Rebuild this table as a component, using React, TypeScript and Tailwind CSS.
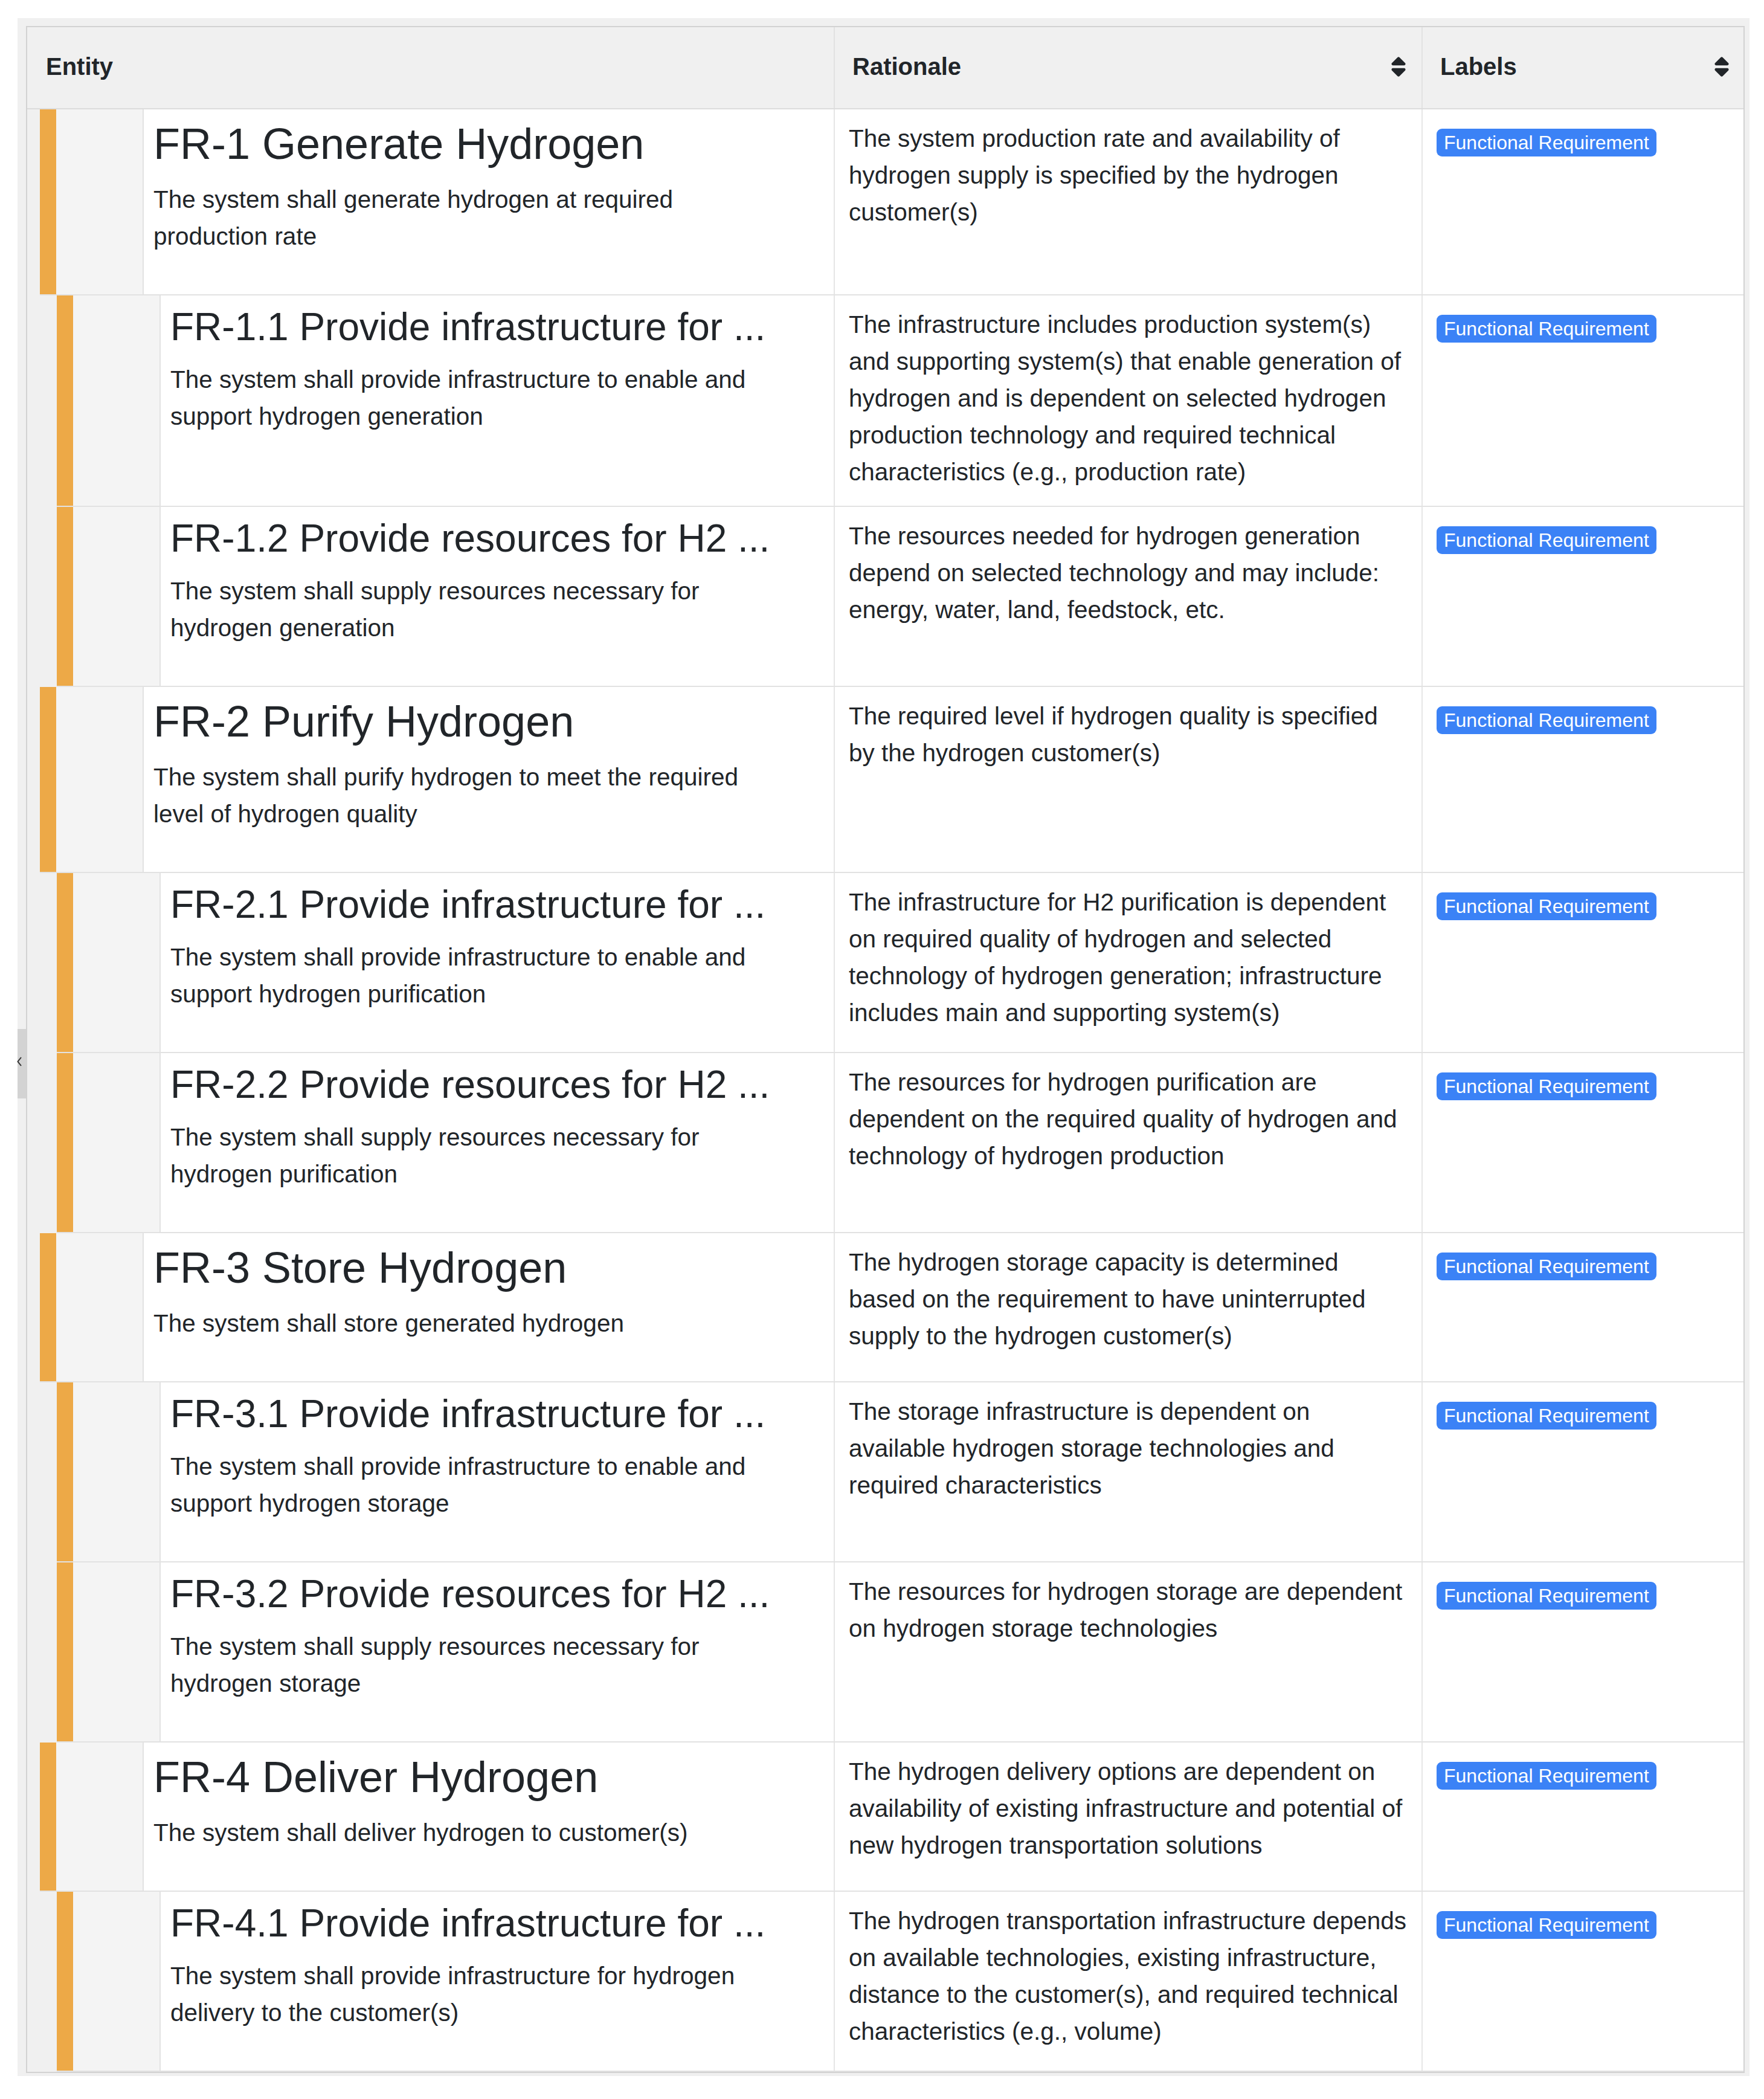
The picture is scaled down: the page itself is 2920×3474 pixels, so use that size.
import React from 'react';

interface Requirement {
  depth: number;
  title: string;
  description: string;
  rationale: string;
}

const requirements: Requirement[] = [
  {
    depth: 0,
    title: 'FR-1 Generate Hydrogen',
    description: 'The system shall generate hydrogen at required production rate',
    rationale: 'The system production rate and availability of hydrogen supply is specified by the hydrogen customer(s)'
  },
  {
    depth: 1,
    title: 'FR-1.1 Provide infrastructure for ...',
    description: 'The system shall provide infrastructure to enable and support hydrogen generation',
    rationale: 'The infrastructure includes production system(s) and supporting system(s) that enable generation of hydrogen and is dependent on selected hydrogen production technology and required technical characteristics (e.g., production rate)'
  },
  {
    depth: 1,
    title: 'FR-1.2 Provide resources for H2 ...',
    description: 'The system shall supply resources necessary for hydrogen generation',
    rationale: 'The resources needed for hydrogen generation depend on selected technology and may include: energy, water, land, feedstock, etc.'
  },
  {
    depth: 0,
    title: 'FR-2 Purify Hydrogen',
    description: 'The system shall purify hydrogen to meet the required level of hydrogen quality',
    rationale: 'The required level if hydrogen quality is specified by the hydrogen customer(s)'
  },
  {
    depth: 1,
    title: 'FR-2.1 Provide infrastructure for ...',
    description: 'The system shall provide infrastructure to enable and support hydrogen purification',
    rationale: 'The infrastructure for H2 purification is dependent on required quality of hydrogen and selected technology of hydrogen generation; infrastructure includes main and supporting system(s)'
  },
  {
    depth: 1,
    title: 'FR-2.2 Provide resources for H2 ...',
    description: 'The system shall supply resources necessary for hydrogen purification',
    rationale: 'The resources for hydrogen purification are dependent on the required quality of hydrogen and technology of hydrogen production'
  },
  {
    depth: 0,
    title: 'FR-3 Store Hydrogen',
    description: 'The system shall store generated hydrogen',
    rationale: 'The hydrogen storage capacity is determined based on the requirement to have uninterrupted supply to the hydrogen customer(s)'
  },
  {
    depth: 1,
    title: 'FR-3.1 Provide infrastructure for ...',
    description: 'The system shall provide infrastructure to enable and support hydrogen storage',
    rationale: 'The storage infrastructure is dependent on available hydrogen storage technologies and required characteristics'
  },
  {
    depth: 1,
    title: 'FR-3.2 Provide resources for H2 ...',
    description: 'The system shall supply resources necessary for hydrogen storage',
    rationale: 'The resources for hydrogen storage are dependent on hydrogen storage technologies'
  },
  {
    depth: 0,
    title: 'FR-4 Deliver Hydrogen',
    description: 'The system shall deliver hydrogen to customer(s)',
    rationale: 'The hydrogen delivery options are dependent on availability of existing infrastructure and potential of new hydrogen transportation solutions'
  },
  {
    depth: 1,
    title: 'FR-4.1 Provide infrastructure for ...',
    description: 'The system shall provide infrastructure for hydrogen delivery to the customer(s)',
    rationale: 'The hydrogen transportation infrastructure depends on available technologies, existing infrastructure, distance to the customer(s), and required technical characteristics (e.g., volume)'
  }
];

const SortIcon: React.FC = () => (
  <svg viewBox="0 0 320 512" className="w-[24px] h-[37px]" fill="#212529">
    <path d="M137.4 41.4c12.5-12.5 32.8-12.5 45.3 0l128 128c9.2 9.2 11.9 22.9 6.9 34.9s-16.6 19.8-29.6 19.8H32c-12.9 0-24.6-7.8-29.6-19.8s-2.2-25.7 6.9-34.9l128-128zm0 429.3l-128-128c-9.2-9.2-11.9-22.9-6.9-34.9s16.6-19.8 29.6-19.8H288c12.9 0 24.6 7.8 29.6 19.8s2.2 25.7-6.9 34.9l-128 128c-12.5 12.5-32.8 12.5-45.3 0z" />
  </svg>
);

const Row: React.FC<{ item: Requirement }> = ({ item }) => {
  const isChild = item.depth > 0;
  return (
    <div className={`flex ${isChild ? 'pl-[49px]' : 'pl-[21px]'}`}>
      <div className="flex flex-1 min-w-0 border-b-2 border-[#e2e2e2]">
        {/* entity */}
        <div className="flex flex-1 min-w-0">
          <div className="w-[27px] shrink-0 bg-[#eda947]" />
          <div className="w-[145px] shrink-0 bg-[#f4f4f4] border-r-2 border-[#e2e2e2]" />
          <div className="flex-1 min-w-0 bg-white pl-[16px] pr-[110px] pt-[18px] pb-[25px]">
            <div
              className={`whitespace-nowrap mb-[22px] ${
                isChild ? 'text-[64px] leading-[69px]' : 'text-[72px] leading-[79px]'
              }`}
            >
              {item.title}
            </div>
            <p className="text-[40.5px] leading-[61px] mb-[40px]">{item.description}</p>
          </div>
        </div>

        {/* rationale */}
        <div className="w-[973px] shrink-0 bg-white border-l-2 border-[#e6e6e6] pl-[23px] pr-[22px] pt-[18px] pb-[25px] text-[40.5px] leading-[61px]">
          {item.rationale}
        </div>

        {/* labels */}
        <div className="w-[533px] shrink-0 bg-white border-l-2 border-[#e6e6e6] pl-[23px] pt-[32px]">
          <span className="inline-flex items-center h-[46px] px-[12px] rounded-[9px] bg-[#3b82f6] text-white text-[32px] leading-none">
            Functional Requirement
          </span>
        </div>
      </div>
    </div>
  );
};

const App: React.FC = () => {
  return (
    <div className="relative min-h-[3474px] bg-white pt-[30px] pl-[29px] text-[#212529] font-['Liberation_Sans',Arial,sans-serif]">
      {/* sidebar toggle */}
      <div className="absolute left-[29px] top-[1703px] w-[14px] h-[115px] bg-[#d3d3d3]">
        <svg viewBox="0 0 8 20" className="absolute left-[-1px] top-[44px] w-[8px] h-[20px]" fill="none" stroke="#333" strokeWidth="2">
          <path d="M7 3 L1.5 10 L7 17" />
        </svg>
      </div>

      <div className="w-[2867px] bg-[#f0f0f0] pt-[13px] pl-[14px] pr-[8px] pb-[5px]">
        <div className="w-[2845px] border-2 border-[#d2d2d2] bg-[#f0f0f0]">
          {/* header */}
          <div className="flex h-[136px] bg-[#f0f0f0] border-b-2 border-[#dcdcdc] text-[40px] font-bold">
            <div className="flex-1 flex items-center pl-[31px] pb-[4px]">Entity</div>
            <div className="w-[973px] flex items-center justify-between border-l-2 border-[#e2e2e2] pl-[29px] pr-[26px] pb-[4px]">
              <span>Rationale</span>
              <SortIcon />
            </div>
            <div className="w-[533px] flex items-center justify-between border-l-2 border-[#e2e2e2] pl-[29px] pr-[24px] pb-[4px]">
              <span>Labels</span>
              <SortIcon />
            </div>
          </div>

          {requirements.map((item) => (
            <Row key={item.title + item.description} item={item} />
          ))}
        </div>
      </div>
    </div>
  );
};

export default App;
